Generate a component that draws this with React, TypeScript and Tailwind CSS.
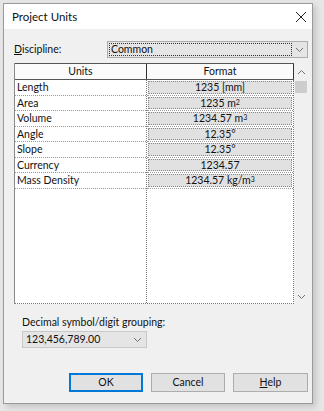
import React from 'react';

const rows = [
  { name: 'Length', value: <>1235 [mm]</> },
  { name: 'Area', value: <>1235 m<sup className="text-[7px] relative -top-[1px]">2</sup></> },
  { name: 'Volume', value: <>1234.57 m<sup className="text-[7px] relative -top-[1px]">3</sup></> },
  { name: 'Angle', value: <>12.35°</> },
  { name: 'Slope', value: <>12.35°</> },
  { name: 'Currency', value: <>1234.57</> },
  { name: 'Mass Density', value: <>1234.57 kg/m<sup className="text-[7px] relative -top-[1px]">3</sup></> },
];

// small windows-style chevron
function Chevron({ up = false }: { up?: boolean }) {
  return (
    <svg width="9" height="6" viewBox="0 0 9 6" className="shrink-0">
      <path d={up ? 'M1 5 L4.5 1.5 L8 5' : 'M1 1 L4.5 4.5 L8 1'} fill="none" stroke="#707070" strokeWidth="1" />
    </svg>
  );
}

export default function App() {
  return (
    <div
      className="w-[324px] h-[411px] bg-[#e6e6e6] pt-[3px] pl-[3px] text-[11px] text-[#111]"
      style={{ fontFamily: 'Lato, "Open Sans", sans-serif' }}
    >
      <div className="w-[310px] h-[401px] border border-[#9a9a9a] bg-[#f0f0f0] flex flex-col shadow-[3px_3px_6px_rgba(0,0,0,0.15)]">
        {/* title bar */}
        <div className="h-[25px] bg-white flex items-center justify-between pl-[8px] pr-[3px]">
          <span className="text-[11.5px] leading-none">Project Units</span>
          <svg width="16" height="16" viewBox="0 0 16 16">
            <path d="M3 3 L13 13 M13 3 L3 13" stroke="#222" strokeWidth="1" />
          </svg>
        </div>

        <div className="flex flex-col pl-[10px] pr-[4px]">
          {/* discipline */}
          <div className="flex items-center mt-[12px] h-[17px]">
            <span className="w-[93px] text-[10.5px]">
              <span className="underline">D</span>iscipline:
            </span>
            <div className="flex-1 h-[17px] bg-[#e5e5e5] border border-[#adadad] flex items-center pl-[1px] pr-[3px]">
              <div className="flex-1 h-[13px] border border-dotted border-[#333] flex items-center pl-[1px] text-[10.5px] leading-none">
                Common
              </div>
              <div className="w-[12px] flex justify-end">
                <Chevron />
              </div>
            </div>
          </div>

          {/* grid */}
          <div className="mt-[5px] h-[241px] flex bg-[#f0f0f0] border-l border-[#8a8a8a]">
            <div className="w-[279px] flex flex-col bg-white">
              <div className="h-[17px] flex border-t border-[#555] border-b bg-[#fbfbfb]">
                <div className="w-[132px] flex items-center justify-center text-[10.5px] border-r border-[#333]">Units</div>
                <div className="flex-1 flex items-center justify-center text-[10.5px] border-r border-[#333]">Format</div>
              </div>
              <div className="flex-1 flex border-r border-b border-dotted border-[#777]">
                <div className="w-[132px] flex flex-col border-r border-dotted border-[#777]">
                  {rows.map((r) => (
                    <div key={r.name} className="h-[15.5px] flex items-center pl-[2px] text-[10.5px] leading-none border-b border-dotted border-[#999]">
                      {r.name}
                    </div>
                  ))}
                </div>
                <div className="flex-1 flex flex-col">
                  {rows.map((r) => (
                    <div key={r.name} className="h-[15.5px] flex items-stretch px-[1px] py-[1px] border-b border-dotted border-[#999]">
                      <div className="flex-1 bg-[#e1e1e1] border border-dotted border-[#888] flex items-center justify-center text-[10.5px] leading-none">
                        {r.value}
                      </div>
                    </div>
                  ))}
                </div>
              </div>
            </div>
            {/* scrollbar */}
            <div className="flex-1 flex flex-col items-center">
              <div className="h-[17px] flex items-center">
                <Chevron up />
              </div>
              <div className="w-[12px] h-[12px] bg-[#cdcdcd] mt-[1px]" />
              <div className="flex-1" />
              <div className="h-[14px] flex items-center">
                <Chevron />
              </div>
            </div>
          </div>

          {/* decimal grouping */}
          <div className="pl-[8px] mt-[12px] flex flex-col">
            <span className="text-[10.5px] leading-[12px]">Decimal symbol/digit grouping:</span>
            <div className="mt-[3px] w-[125px] h-[17px] bg-[#e5e5e5] border border-[#c8c8c8] flex items-center justify-between pl-[3px] pr-[4px] text-[10.5px]">
              <span>123,456,789.00</span>
              <Chevron />
            </div>
          </div>

          {/* buttons */}
          <div className="mt-[25px] flex justify-end gap-[8px]">
            <button className="w-[74px] h-[19px] bg-[#e1e1e1] border-2 border-[#0078d7] text-[10.5px] leading-none">OK</button>
            <button className="w-[74px] h-[19px] bg-[#e1e1e1] border border-[#adadad] text-[10.5px] leading-none">Cancel</button>
            <button className="w-[75px] h-[19px] bg-[#e1e1e1] border border-[#adadad] text-[10.5px] leading-none">
              <span className="underline">H</span>elp
            </button>
          </div>
        </div>
      </div>
    </div>
  );
}
